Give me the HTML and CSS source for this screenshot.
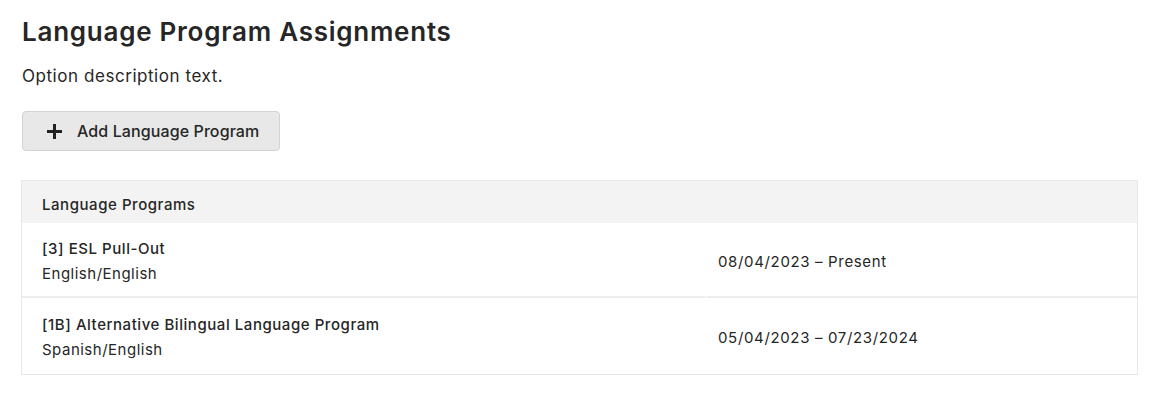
FILE: index.html
```html
<!DOCTYPE html>
<html lang="en">
<head>
    <meta charset="UTF-8">
    <meta name="viewport" content="width=device-width, initial-scale=1.0">
    <title>Language Program Assignments</title>
    <link rel="stylesheet" href="styles.css">
</head>
<body>
    <div class="page">
        <h1>Language Program Assignments</h1>
        <p class="description">Option description text.</p>

        <button type="button" class="btn">
            <svg class="btn-icon" width="17" height="17" viewBox="0 0 17 17" aria-hidden="true">
                <path d="M8.5 1v15M1 8.5h15" stroke="#222" stroke-width="3" fill="none"/>
            </svg>
            <span>Add Language Program</span>
        </button>

        <div class="programs">
            <div class="programs-head">Language Programs</div>
            <div class="program-row">
                <div class="program-cell">
                    <div class="program-name">[3] ESL Pull-Out</div>
                    <div class="program-lang">English/English</div>
                </div>
                <div class="program-cell program-dates">08/04/2023 – Present</div>
            </div>
            <div class="program-row">
                <div class="program-cell">
                    <div class="program-name">[1B] Alternative Bilingual Language Program</div>
                    <div class="program-lang">Spanish/English</div>
                </div>
                <div class="program-cell program-dates">05/04/2023 – 07/23/2024</div>
            </div>
        </div>
    </div>
</body>
</html>
```

FILE: styles.css
```css
* {
    margin: 0;
    padding: 0;
    box-sizing: border-box;
}

body {
    font-family: 'Inter', 'Liberation Sans', sans-serif;
    color: #262626;
    background: #fff;
}

.page {
    padding: 16px 30px 0 21px;
}

h1 {
    font-size: 26px;
    font-weight: 600;
    line-height: 32px;
    letter-spacing: 0.75px;
    margin-left: 1px;
    color: #262626;
}

.description {
    font-size: 17px;
    line-height: 22px;
    letter-spacing: 0.55px;
    margin: 17px 0 0 1px;
}

.btn {
    display: flex;
    align-items: center;
    gap: 14px;
    margin: 24px 0 0 1px;
    width: 258px;
    height: 40px;
    padding: 0 16px 0 23px;
    background: #e8e8e8;
    border: 1px solid #d3d3d3;
    border-radius: 4px;
    font-family: inherit;
    font-size: 16px;
    font-weight: 550;
    letter-spacing: 0.1px;
    color: #262626;
    white-space: nowrap;
    cursor: pointer;
}

.btn-icon {
    flex: none;
}

.programs {
    margin-top: 29px;
    border: 1px solid #e8e8e8;
}

.programs-head {
    height: 42px;
    padding: 5px 20px 0;
    display: flex;
    align-items: center;
    background: #f3f3f3;
    font-size: 15px;
    font-weight: 550;
    letter-spacing: 0.55px;
}

.program-row {
    display: grid;
    grid-template-columns: 684px 1fr;
    column-gap: 1px;
    height: 75px;
}

.program-row + .program-row {
    height: 76px;
}

.program-cell {
    display: flex;
    flex-direction: column;
    justify-content: center;
    padding: 2px 20px 0;
    font-size: 15px;
    line-height: 25px;
    letter-spacing: 0.5px;
}

.program-row:not(:last-child) .program-cell {
    border-bottom: 2px solid #ededed;
}

.program-name {
    font-weight: 550;
    letter-spacing: 0.55px;
}

.program-dates {
    padding: 3px 0 0 11px;
    letter-spacing: 0.65px;
}
```
